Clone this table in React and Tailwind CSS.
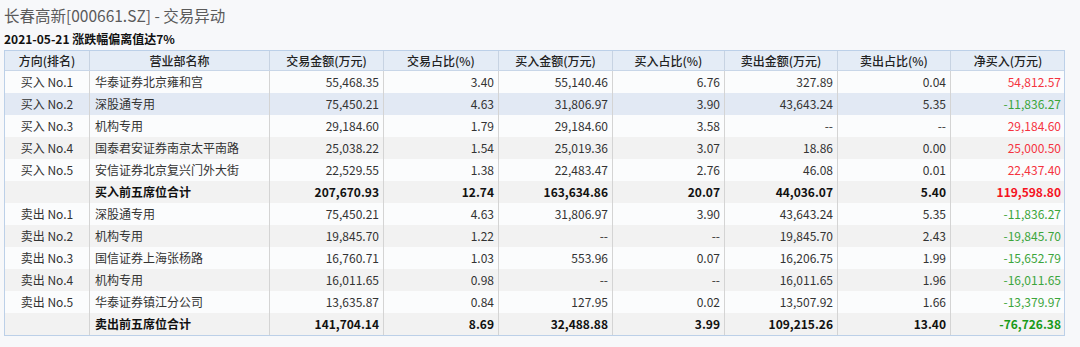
import React from 'react';

const cols = [
  { w: 'w-[85px]', align: 'text-center' },
  { w: 'w-[180px]', align: 'text-left pl-[5px]' },
  { w: 'w-[114px]', align: 'text-right pr-[4px]' },
  { w: 'w-[115px]', align: 'text-right pr-[4px]' },
  { w: 'w-[114px]', align: 'text-right pr-[4px]' },
  { w: 'w-[112px]', align: 'text-right pr-[4px]' },
  { w: 'w-[113px]', align: 'text-right pr-[4px]' },
  { w: 'w-[113px]', align: 'text-right pr-[4px]' },
  { w: 'w-[114px]', align: 'text-right pr-[4px]' },
];

const headers = ['方向(排名)', '营业部名称', '交易金额(万元)', '交易占比(%)', '买入金额(万元)', '买入占比(%)', '卖出金额(万元)', '卖出占比(%)', '净买入(万元)'];

// bg: w = white, g = gray, b = highlighted
const rows = [
  { bg: 'w', cells: ['买入 No.1', '华泰证券北京雍和宫', '55,468.35', '3.40', '55,140.46', '6.76', '327.89', '0.04', '54,812.57'] },
  { bg: 'b', cells: ['买入 No.2', '深股通专用', '75,450.21', '4.63', '31,806.97', '3.90', '43,643.24', '5.35', '-11,836.27'] },
  { bg: 'w', cells: ['买入 No.3', '机构专用', '29,184.60', '1.79', '29,184.60', '3.58', '--', '--', '29,184.60'] },
  { bg: 'g', cells: ['买入 No.4', '国泰君安证券南京太平南路', '25,038.22', '1.54', '25,019.36', '3.07', '18.86', '0.00', '25,000.50'] },
  { bg: 'w', cells: ['买入 No.5', '安信证券北京复兴门外大街', '22,529.55', '1.38', '22,483.47', '2.76', '46.08', '0.01', '22,437.40'] },
  { bg: 'g', sum: true, cells: ['', '买入前五席位合计', '207,670.93', '12.74', '163,634.86', '20.07', '44,036.07', '5.40', '119,598.80'] },
  { bg: 'w', cells: ['卖出 No.1', '深股通专用', '75,450.21', '4.63', '31,806.97', '3.90', '43,643.24', '5.35', '-11,836.27'] },
  { bg: 'g', cells: ['卖出 No.2', '机构专用', '19,845.70', '1.22', '--', '--', '19,845.70', '2.43', '-19,845.70'] },
  { bg: 'w', cells: ['卖出 No.3', '国信证券上海张杨路', '16,760.71', '1.03', '553.96', '0.07', '16,206.75', '1.99', '-15,652.79'] },
  { bg: 'g', cells: ['卖出 No.4', '机构专用', '16,011.65', '0.98', '--', '--', '16,011.65', '1.96', '-16,011.65'] },
  { bg: 'w', cells: ['卖出 No.5', '华泰证券镇江分公司', '13,635.87', '0.84', '127.95', '0.02', '13,507.92', '1.66', '-13,379.97'] },
  { bg: 'g', sum: true, cells: ['', '卖出前五席位合计', '141,704.14', '8.69', '32,488.88', '3.99', '109,215.26', '13.40', '-76,726.38'] },
];

const bgClass = { w: 'bg-[#fbfcfd]', g: 'bg-[#f2f2f2]', b: 'bg-[#e2e9f4]' };

const netColor = (v, sum) => {
  if (v.startsWith('-')) return sum ? 'text-[#189a18]' : 'text-[#3ba53b]';
  return sum ? 'text-[#f5121f]' : 'text-[#f5333f]';
};

export default function App() {
  return (
    <div className="w-[1080px] h-[347px] bg-[#f7f8fa] pl-[4px] pt-[5px] overflow-hidden" style={{ fontFamily: '"Noto Sans CJK SC", "Noto Sans", sans-serif' }}>
      <h1 className="text-[15.5px] leading-[20px] text-[#5a5a5a]">长春高新[000661.SZ] - 交易异动</h1>
      <div className="mt-[6px] text-[12px] leading-[16px] font-bold text-[#111]">2021-05-21 涨跌幅偏离值达7%</div>
      <div className="mt-[3px] w-[1061px] border border-[#bcd0e8] text-[12px] text-[#333]">
        <div className="flex h-[20px] bg-[#e4ecf6] border-b border-[#c8d6e8] font-medium text-[#222]">
          {headers.map((h, i) => (
            <div key={i} className={`${cols[i].w} shrink-0 text-center leading-[20px] ${i < 8 ? 'border-r border-[#c7d3e2]' : ''}`}>{h}</div>
          ))}
        </div>
        {rows.map((r, ri) => (
          <div key={ri} className={`flex h-[22px] ${bgClass[r.bg]} ${r.sum ? 'font-bold text-[#111]' : ''}`}>
            {r.cells.map((c, ci) => (
              <div
                key={ci}
                className={`${cols[ci].w} ${cols[ci].align} shrink-0 leading-[22px] whitespace-nowrap ${ci < 8 ? 'border-r border-[#d4d4d4]' : ''} ${ci === 8 ? netColor(c, r.sum) : ''}`}
              >
                {c}
              </div>
            ))}
          </div>
        ))}
      </div>
    </div>
  );
}
